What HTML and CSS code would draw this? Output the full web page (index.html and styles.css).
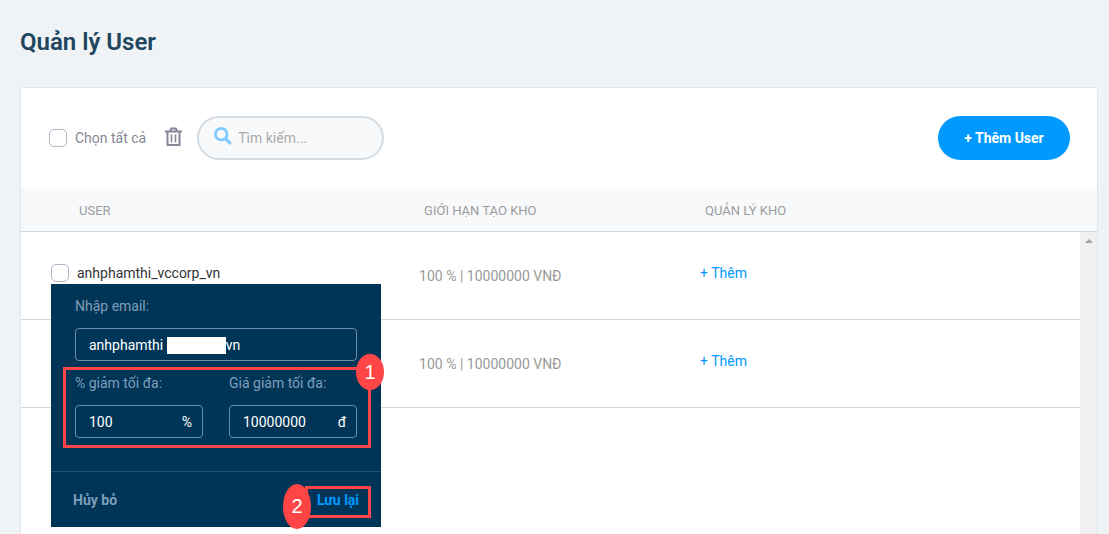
FILE: index.html
```html
<!DOCTYPE html>
<html lang="vi">
<head>
    <meta charset="UTF-8">
    <meta name="viewport" content="width=device-width, initial-scale=1.0">
    <title>Quản lý User</title>
    <link rel="stylesheet" href="styles.css">
</head>
<body>
    <h1>Quản lý User</h1>
    <main class="card">
        <div class="toolbar">
            <label class="select-all"><input type="checkbox" class="check">Chọn tất cả</label>
            <button type="button" class="trash" aria-label="Xóa">
                <svg width="17" height="20" viewBox="0 0 17 20" fill="none" stroke="#858796" stroke-width="2">
                    <path d="M0 4.5h17M2.5 5v13h12V5M5 4l1.2-2.5h4.6L12 4" />
                    <path d="M6.5 7.5v8M10.5 7.5v8" stroke-width="1.6" />
                </svg>
            </button>
            <label class="search">
                <svg width="18" height="18" viewBox="0 0 18 18" fill="none" stroke="#80caff">
                    <circle cx="7.2" cy="7.2" r="5.8" stroke-width="2.8" />
                    <path d="M11.5 11.5l5.3 5.3" stroke-width="3.2" />
                </svg>
                <input type="text" placeholder="Tìm kiếm..." aria-label="Tìm kiếm">
            </label>
            <button type="button" class="add-user">+ Thêm User</button>
        </div>
        <div class="list">
            <table>
                <thead>
                    <tr>
                        <th class="col-user">USER</th>
                        <th class="col-limit">GIỚI HẠN TẠO KHO</th>
                        <th>QUẢN LÝ KHO</th>
                    </tr>
                </thead>
                <tbody>
                    <tr>
                        <td class="user">
                            <label class="user-name"><input type="checkbox" class="check">anhphamthi_vccorp_vn</label>
                            <form class="popup">
                                <div class="popup-body">
                                    <label for="email">Nhập email:</label>
                                    <div class="field email">
                                        <input type="text" id="email" value="anhphamthi&nbsp;&nbsp;&nbsp;&nbsp;&nbsp;&nbsp;&nbsp;&nbsp;&nbsp;&nbsp;&nbsp;&nbsp;&nbsp;&nbsp;&nbsp;&nbsp;&nbsp;&nbsp;vn">
                                        <span class="mask"></span>
                                    </div>
                                    <div class="limits">
                                        <div>
                                            <label for="percent">% giảm tối đa:</label>
                                            <div class="field"><input type="text" id="percent" value="100"><span>%</span></div>
                                        </div>
                                        <div>
                                            <label for="price">Giá giảm tối đa:</label>
                                            <div class="field"><input type="text" id="price" value="10000000"><span>đ</span></div>
                                        </div>
                                        <div class="frame"></div>
                                        <span class="step step-one">1</span>
                                    </div>
                                </div>
                                <div class="popup-footer">
                                    <button type="button" class="cancel">Hủy bỏ</button>
                                    <div class="save-wrap">
                                        <button type="button" class="save">Lưu lại</button>
                                        <span class="step step-two">2</span>
                                    </div>
                                </div>
                            </form>
                        </td>
                        <td class="limit">100 % | 10000000 VNĐ</td>
                        <td class="manage"><a href="#">+ Thêm</a></td>
                    </tr>
                    <tr>
                        <td></td>
                        <td class="limit">100 % | 10000000 VNĐ</td>
                        <td class="manage"><a href="#">+ Thêm</a></td>
                    </tr>
                </tbody>
            </table>
            <div class="scrollbar"></div>
        </div>
    </main>
</body>
</html>
```
FILE: styles.css
```css
* {
    box-sizing: border-box;
}
body {
    margin: 0;
    padding: 0 11px 0 20px;
    height: 100vh;
    display: flex;
    flex-direction: column;
    overflow: hidden;
    background-color: #eff3f6;
    font-family: Roboto, "Liberation Sans", sans-serif;
    font-size: 14px;
    line-height: 20px;
    color: #333;
}
h1 {
    margin: 26px 0 29px;
    font-size: 24px;
    line-height: 32px;
    font-weight: 600;
    color: #20455f;
}
button, input {
    font: inherit;
}
button {
    padding: 0;
    border: 0;
    background: none;
    cursor: pointer;
}
.card {
    flex: 1;
    display: flex;
    flex-direction: column;
    background-color: #fff;
    border: 1px solid #e0e7ec;
    border-bottom: 0;
    border-radius: 4px 4px 0 0;
}
.check {
    appearance: none;
    width: 18px;
    height: 18px;
    margin: 0;
    border: 1px solid #b4b3c8;
    border-radius: 5px;
    background-color: #fff;
}

/* Toolbar */
.toolbar {
    display: flex;
    align-items: center;
    padding: 28px 27px 28px 28px;
}
.select-all {
    display: flex;
    align-items: center;
    gap: 8px;
    color: #858796;
}
.trash {
    display: flex;
    margin: 0 15px 2px 19px;
}
.search {
    display: flex;
    align-items: center;
    gap: 6px;
    width: 187px;
    height: 44px;
    padding: 0 15px;
    border: 2px solid #d3dce3;
    border-radius: 22px;
    background-color: #f8f9fb;
}
.search svg {
    flex-shrink: 0;
    margin-bottom: 4px;
}
.search input {
    width: 100%;
    min-width: 0;
    padding: 0;
    border: 0;
    outline: 0;
    background: none;
}
.search input::placeholder {
    color: #aaa;
}
.add-user {
    width: 132px;
    height: 44px;
    margin-left: auto;
    border-radius: 22px;
    background-color: #0099ff;
    color: #fff;
    font-weight: 700;
}

/* User list */
.list {
    position: relative;
    flex: 1;
}
table {
    width: 100%;
    border-collapse: separate;
    border-spacing: 0;
    table-layout: fixed;
}
th {
    height: 44px;
    padding: 2px 0 0 5px;
    text-align: left;
    font-size: 13px;
    font-weight: 400;
    color: #9b9b9b;
    background-color: #f8f9fb;
    border-bottom: 1px solid #cfd8df;
}
.col-user {
    width: 37%;
    padding-left: 58px;
}
.col-limit {
    width: 281px;
}
td {
    height: 88px;
    padding: 0;
    border-bottom: 1px solid #cfd8df;
}
.user {
    position: relative;
    padding: 0 0 6px 30px;
}
.user-name {
    display: flex;
    align-items: center;
    gap: 8px;
}
.limit {
    color: #999;
}
.manage {
    padding-bottom: 6px;
}
.manage a {
    color: #0099ff;
    text-decoration: none;
}
.scrollbar {
    position: absolute;
    top: 44px;
    right: 0;
    bottom: 0;
    width: 17px;
    background-color: #f0f0f0;
}
.scrollbar::before {
    content: "";
    display: block;
    width: 0;
    margin: 7px auto 0;
    border: 4px solid transparent;
    border-top: 0;
    border-bottom-color: #a0a0a0;
}

/* Edit popup */
.popup {
    position: absolute;
    z-index: 1;
    top: 52px;
    left: 30px;
    width: 330px;
    background-color: #003558;
    color: #7f9fb8;
}
.popup-body {
    padding: 12px 24px 33px;
    border-bottom: 1px solid #1f5378;
}
.popup-body label {
    display: block;
}
.field {
    display: flex;
    align-items: center;
    height: 33px;
    margin-top: 12px;
    padding: 0 10px 0 13px;
    border: 1px solid #6d8da6;
    border-radius: 4px;
    color: #fff;
}
.field input {
    width: 100%;
    min-width: 0;
    padding: 0;
    border: 0;
    outline: 0;
    background: none;
    color: inherit;
}
.email {
    position: relative;
}
.mask {
    position: absolute;
    top: 8px;
    left: 91px;
    width: 59px;
    height: 17px;
    background-color: #fff;
}
.limits {
    position: relative;
    display: grid;
    grid-template-columns: repeat(2, minmax(0, 1fr));
    gap: 26px;
    margin-top: 12px;
}
.popup-footer {
    display: flex;
    align-items: center;
    justify-content: space-between;
    height: 55px;
    padding: 0 10px 0 22px;
}
.cancel {
    color: #7f9fb8;
    font-weight: 700;
}
.save-wrap {
    position: relative;
}
.save {
    display: block;
    width: 66px;
    height: 32px;
    margin-top: 4px;
    padding-bottom: 4px;
    border: 3px solid #ff4545;
    color: #0099ff;
    font-weight: 700;
}

/* Numbered callouts */
.frame {
    position: absolute;
    top: -6px;
    right: -14px;
    bottom: -10px;
    left: -12px;
    border: 3px solid #ff4545;
    pointer-events: none;
}
.step {
    position: absolute;
    display: flex;
    align-items: center;
    justify-content: center;
    width: 28px;
    border-radius: 50%;
    background-color: #ff4545;
    color: #fff;
    font-family: "Liberation Sans", sans-serif;
    font-size: 20px;
}
.step-one {
    top: -19px;
    right: -27px;
    height: 36px;
}
.step-two {
    top: 2px;
    left: -22px;
    height: 45px;
}
```
